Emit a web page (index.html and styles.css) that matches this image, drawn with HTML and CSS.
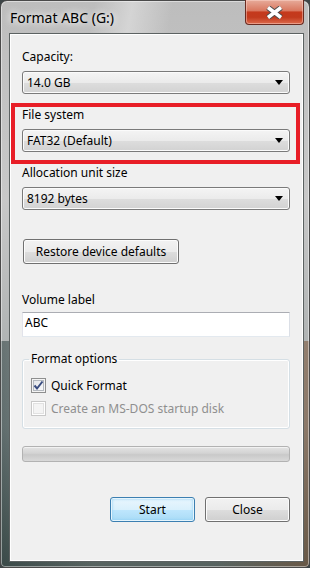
FILE: index.html
```html
<!DOCTYPE html>
<html lang="en">
<head>
<meta charset="UTF-8">
<title>Format ABC (G:)</title>
<link rel="stylesheet" href="styles.css">
</head>
<body>

<div class="window">
	<div class="titlebar">
		<span class="title">Format ABC (G:)</span>
		<button class="close-btn">
			<svg width="19" height="13" viewBox="0 0 19 13">
				<path d="M3 1.5 L16 11.5 M16 1.5 L3 11.5" stroke="#4b4b4b" stroke-width="5.5" fill="none"/>
				<path d="M3 1.5 L16 11.5 M16 1.5 L3 11.5" stroke="#fff" stroke-width="3.5" fill="none"/>
			</svg>
		</button>
	</div>

	<div class="client">
		<div class="label">Capacity:</div>
		<div class="combo"><span class="value">14.0 GB</span><i class="arrow"></i></div>

		<div class="highlight">
			<div class="label">File system</div>
			<div class="combo"><span class="value">FAT32 (Default)</span><i class="arrow"></i></div>
		</div>

		<div class="label">Allocation unit size</div>
		<div class="combo"><span class="value">8192 bytes</span><i class="arrow"></i></div>

		<button class="btn restore">Restore device defaults</button>

		<div class="label volume">Volume label</div>
		<div class="textbox">ABC</div>

		<fieldset class="group">
			<legend>Format options</legend>
			<div class="check">
				<span class="box">
					<svg width="13" height="13" viewBox="0 0 13 13">
						<path d="M2.5 6.5 L5 9.5 L10.5 2.5" stroke="#3a4d80" stroke-width="2" fill="none"/>
					</svg>
				</span>
				Quick Format
			</div>
			<div class="check disabled">
				<span class="box"></span>
				Create an MS-DOS startup disk
			</div>
		</fieldset>

		<div class="progress"></div>

		<div class="actions">
			<button class="btn default">Start</button>
			<button class="btn">Close</button>
		</div>
	</div>
</div>

</body>
</html>
```

FILE: styles.css
```css
* {
	margin: 0;
	padding: 0;
	box-sizing: border-box;
}
body {
	width: 310px;
	height: 568px;
	overflow: hidden;
	background: #3d4547;
	color: #000;
	font: 12px/16px "Noto Sans", sans-serif;
}
.window {
	width: 310px;
	height: 568px;
	display: flex;
	flex-direction: column;
	border: 1px solid #4a4a4a;
	border-radius: 7px 7px 5px 5px;
	background:
		linear-gradient(100deg, rgba(255,255,255,0) 30%, rgba(255,255,255,.35) 42%, rgba(255,255,255,0) 55%) top / 100% 34px no-repeat,
		linear-gradient(to right, rgba(30,50,50,.5), rgba(0,0,0,0) 30%, rgba(0,0,0,0) 70%, rgba(120,80,50,.55)) bottom / 100% 40% no-repeat,
		linear-gradient(#bdbdbd, #c8c8c8 35%, #a2a8a8 75%, #56625f);
	box-shadow: inset 0 0 0 1px rgba(255,255,255,.45);
}

/* title bar */
.titlebar {
	height: 32px;
	flex-shrink: 0;
	display: flex;
	align-items: flex-start;
}
.title {
	margin: 8px 0 0 9px;
	font-size: 14px;
	line-height: 18px;
	text-shadow: 0 0 6px #fff, 0 0 10px rgba(255,255,255,.8);
}
.close-btn {
	margin: -1px 5px 0 auto;
	width: 59px;
	height: 25px;
	display: flex;
	align-items: center;
	justify-content: center;
	border: 1px solid #6a2b20;
	border-top: none;
	border-radius: 0 0 4px 4px;
	background: linear-gradient(#e7ab9a, #d9775f 45%, #c5391c 50%, #c23a1d 72%, #dd6b4c);
	box-shadow: inset 0 0 0 1px rgba(255,220,210,.45);
}

/* client area */
.client {
	flex: 1;
	margin: 0 5px 5px 8px;
	padding: 15px 13px 0 12px;
	background: #f0f0f0;
	border: 1px solid #5c6262;
	box-shadow: inset 0 0 0 1px #fff;
}
.label {
	height: 16px;
	margin-bottom: 6px;
}
.combo {
	height: 23px;
	display: flex;
	align-items: center;
	padding: 0 6px 0 4px;
	border: 1px solid #7a7a7a;
	border-radius: 3px;
	background: linear-gradient(#f4f4f4, #ebebeb 50%, #dddddd 52%, #d2d2d2);
	box-shadow: inset 0 0 0 1px #fbfbfb;
}
.combo .value {
	flex: 1;
}
.arrow {
	width: 0;
	height: 0;
	border-left: 4px solid transparent;
	border-right: 4px solid transparent;
	border-top: 5px solid #000;
}
.highlight {
	margin: 9px -10px 0 -11px;
	padding: 0 6px 8px 7px;
	border: 4px solid #e81e27;
}
.highlight + .label {
	margin-top: 1px;
}

/* buttons */
.btn {
	height: 25px;
	font: inherit;
	color: #000;
	border: 1px solid #707070;
	border-radius: 3px;
	background: linear-gradient(#f2f2f2, #ebebeb 50%, #dddddd 52%, #cfcfcf);
	box-shadow: inset 0 0 0 1px #fcfcfc;
}
.restore {
	display: block;
	width: 156px;
	margin: 29px 0 0 1px;
}
.btn.default {
	border-color: #3c7fb1;
	background: linear-gradient(#eaf6fd, #d9f0fc 50%, #bee6fd 52%, #a9dbf6);
	box-shadow: inset 0 0 0 1px #e5f5fd, inset 0 0 3px 1px #8fd0f3;
}

/* volume label */
.label.volume {
	margin: 28px 0 4px;
}
.textbox {
	height: 25px;
	padding: 0 2px;
	line-height: 20px;
	background: #fff;
	border: 1px solid;
	border-color: #abadb3 #dbdfe6 #e3e9ef #e2e3ea;
}

/* group box */
.group {
	margin-top: 14px;
	padding: 7px 0 8px 8px;
	border: 1px solid #d5dfe5;
	border-radius: 3px;
	box-shadow: inset 0 0 0 1px #fff;
}
.group legend {
	padding: 0 2px;
	margin-left: -2px;
	line-height: 16px;
}
.check {
	height: 23px;
	display: flex;
	align-items: center;
	gap: 5px;
}
.box {
	width: 15px;
	height: 15px;
	display: flex;
	align-items: center;
	justify-content: center;
	border: 1px solid #8e8f8f;
	background: linear-gradient(135deg, #dfe2e6, #fcfcfc);
	box-shadow: inset 0 0 0 1px #f4f4f4, inset 0 0 0 2px #b4b9bf;
}
.check.disabled {
	color: #8f8f8f;
}
.check.disabled .box {
	border-color: #c9c9c9;
	background: #f4f4f4;
	box-shadow: inset 0 0 0 1px #fff, inset 0 0 0 2px #e1e1e1;
}

/* progress */
.progress {
	margin-top: 17px;
	height: 16px;
	border: 1px solid #b2b2b2;
	border-radius: 3px;
	background: linear-gradient(#e4e4e4, #d3d3d3 45%, #c9c9c9 55%, #d9d9d9);
	box-shadow: inset 0 1px 0 #f2f2f2;
}

.actions {
	margin-top: 35px;
	display: flex;
	justify-content: flex-end;
	gap: 10px;
}
.actions .btn {
	width: 85px;
}
```
